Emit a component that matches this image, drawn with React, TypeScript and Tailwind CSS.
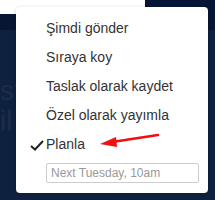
import React from "react";

const items = ["Şimdi gönder", "Sıraya koy", "Taslak olarak kaydet", "Özel olarak yayımla"];

const App: React.FC = () => {
  return (
    <div className="relative w-[215px] h-[200px] overflow-hidden bg-[#0e213f] font-['Liberation_Sans',Arial,sans-serif]">
      {/* page behind the menu */}
      <div className="flex h-[14px]">
        <div className="w-[145px] bg-white" />
        <div className="flex-1 bg-[#061535]" />
      </div>
      <div className="h-[16px] bg-[#071633]" />
      <div className="pt-[46px] text-[28px] leading-[30px] text-[#1b2d4b]">
        <div>st</div>
        <div>il</div>
      </div>

      {/* dropdown menu */}
      <div className="absolute left-[16px] top-[7px] w-[192px] h-[186px] rounded-[4px] bg-white shadow-[0_1px_4px_rgba(0,0,0,0.2)]">
        <ul className="pt-[7px] text-[14px] text-[#333]">
          {items.map((label) => (
            <li key={label} className="h-[29px] leading-[29px] pl-[30px]">
              {label}
            </li>
          ))}
          <li className="relative h-[29px] leading-[29px] pl-[30px]">
            <svg
              className="absolute left-[14px] top-[10px]"
              width="14"
              height="11"
              viewBox="0 0 14 11"
              fill="none"
            >
              <path d="M1 6 L5 9.5 L13 1" stroke="#222" strokeWidth="2" />
            </svg>
            Planla
          </li>
        </ul>
        <div className="ml-[30px] mt-[4px] w-[153px] h-[20px] rounded-[2px] border border-[#ccc] pl-[4px] text-[12px] leading-[18px] text-[#999]">
          Next Tuesday, 10am
        </div>
      </div>

      {/* annotation arrow */}
      <svg className="absolute left-0 top-0" width="215" height="200" viewBox="0 0 215 200">
        <line x1="158" y1="135" x2="112" y2="142" stroke="#f01010" strokeWidth="2.5" strokeLinecap="round" />
        <polygon points="100,144 116,137 117,147" fill="#f01010" />
      </svg>
    </div>
  );
};

export default App;
